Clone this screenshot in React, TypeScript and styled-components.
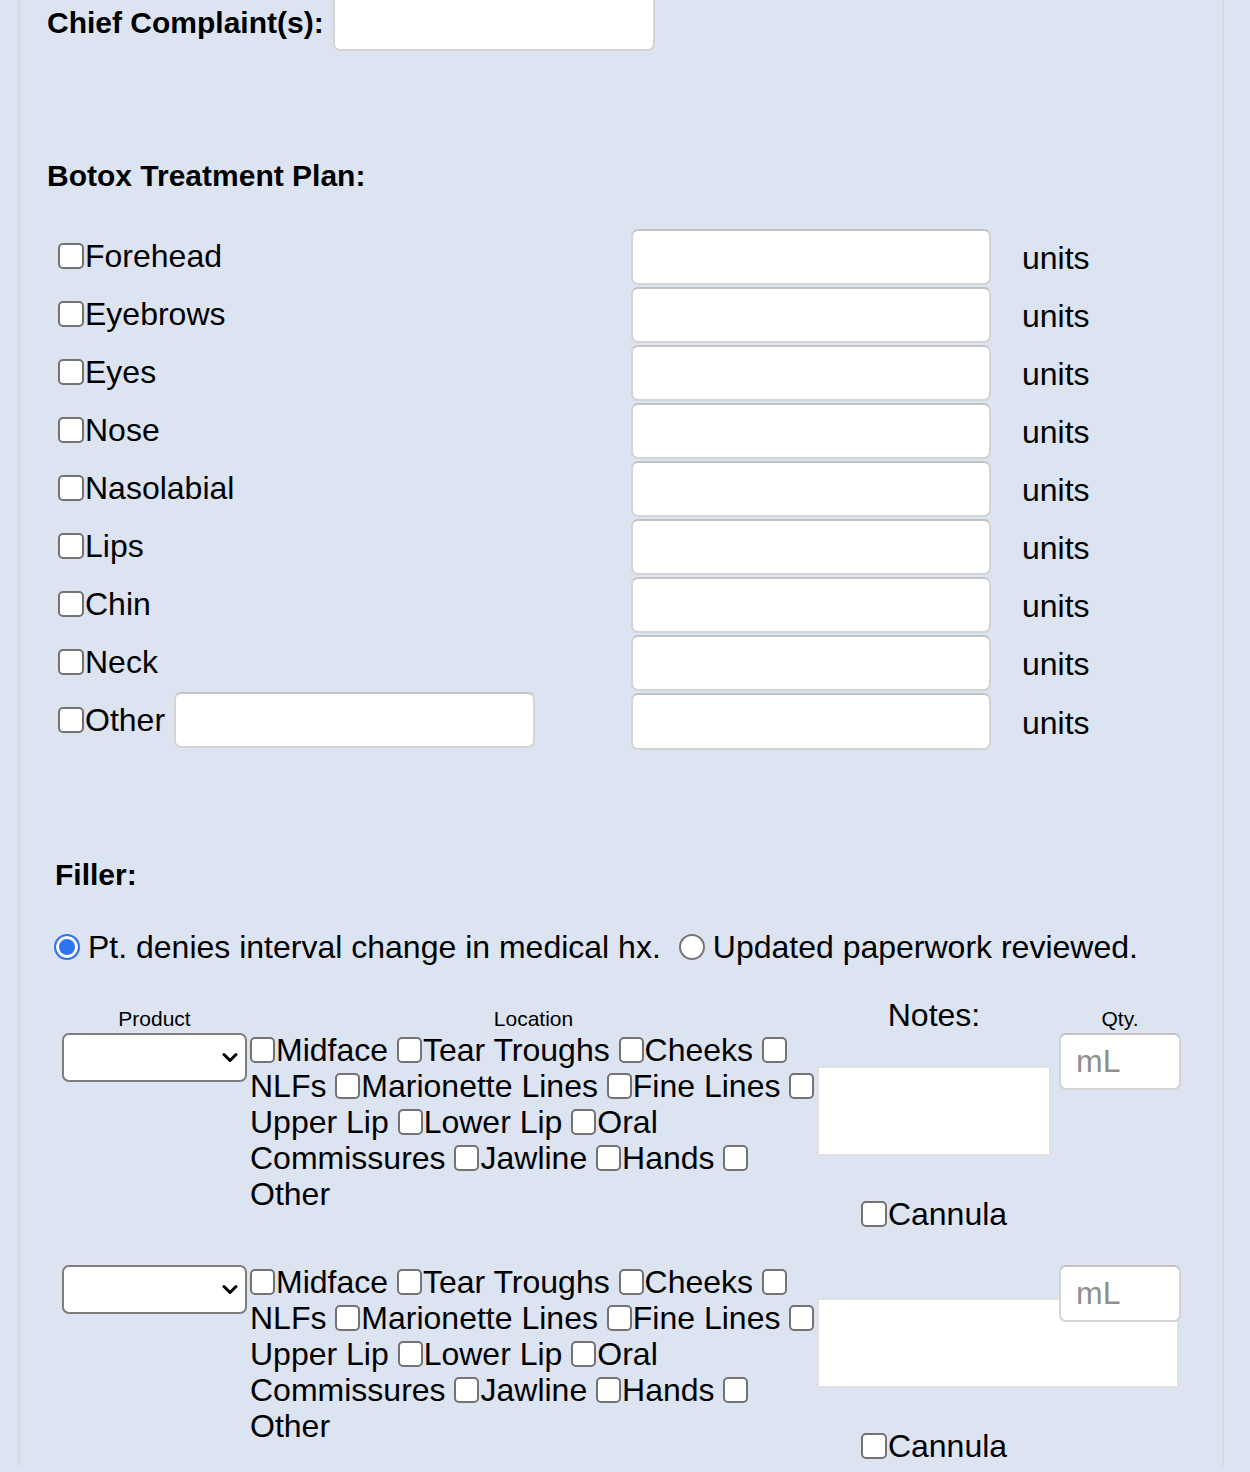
import styled, { createGlobalStyle } from "styled-components";

const GlobalStyle = createGlobalStyle`
  html, body {
    margin: 0;
    padding: 0;
    background: #dce3f1;
  }
  body {
    font-family: "Liberation Sans", Arial, sans-serif;
    color: #000;
  }
`;

const Page = styled.div`
  background: #dce3f1;
  min-height: 1472px;
  overflow: hidden;
`;

const Panel = styled.div`
  margin-left: 18px;
  width: 1206px;
  min-height: 1472px;
  border-left: 2px solid #d5d9e2;
  border-right: 2px solid #d5d9e2;
  padding-left: 27px;
  box-sizing: border-box;
  font-size: 32px;
  line-height: 36px;
`;

const ChiefRow = styled.div`
  display: flex;
  align-items: center;
  gap: 9px;
  margin-top: -6px;
`;

const Heading = styled.div<{ $indent?: number }>`
  font-weight: 700;
  font-size: 30px;
  line-height: 34px;
  margin-left: ${(p) => p.$indent ?? 0}px;
`;

const TextBox = styled.input<{ $w: number; $h?: number }>`
  box-sizing: border-box;
  width: ${(p) => p.$w}px;
  height: ${(p) => p.$h ?? 56}px;
  border: 2px solid #d4d4d4;
  border-top-color: #c3c3c3;
  border-radius: 7px;
  background: #fff;
  font: inherit;
  padding: 0 14px;
  margin: 0;
  outline: none;

  &::placeholder {
    color: #8f8f8f;
  }
`;

const BotoxHeading = styled(Heading)`
  margin-top: 108px;
`;

const BotoxGrid = styled.div`
  display: grid;
  grid-template-columns: 573px 360px auto;
  row-gap: 2px;
  margin-top: 36px;
  margin-left: 11px;
  align-items: center;
`;

const AreaLabel = styled.label`
  display: flex;
  align-items: center;
  height: 56px;
  margin-top: -3px;
  white-space: nowrap;
`;

const Units = styled.span`
  padding-left: 31px;
  padding-top: 2px;
`;

const Check = styled.input.attrs({ type: "checkbox" })<{ $size?: number }>`
  appearance: none;
  -webkit-appearance: none;
  box-sizing: border-box;
  width: ${(p) => p.$size ?? 25}px;
  height: ${(p) => p.$size ?? 26}px;
  margin: 0 1px 0 0;
  border: 2px solid #737373;
  border-radius: 5px;
  background: #fff;
  vertical-align: -2px;
  flex: none;
`;

const OtherBox = styled(TextBox)`
  margin-left: 9px;
`;

const FillerHeading = styled(Heading)`
  margin-top: 108px;
`;

const RadioRow = styled.div`
  display: flex;
  align-items: center;
  margin-top: 37px;
  margin-left: 7px;
  height: 36px;
  white-space: nowrap;
`;

const RadioOption = styled.label`
  display: inline-flex;
  align-items: center;
  gap: 8px;
  margin-right: 18px;
`;

const Radio = styled.input.attrs({ type: "radio" })`
  appearance: none;
  -webkit-appearance: none;
  box-sizing: border-box;
  width: 26px;
  height: 26px;
  margin: 0;
  border-radius: 50%;
  border: 2px solid #767676;
  background: #fff;

  &:checked {
    border-color: #2f74ef;
    background: #2f74ef;
    box-shadow: inset 0 0 0 3px #fff;
  }
`;

const FillerGrid = styled.div`
  display: grid;
  grid-template-columns: 188px 567px 242px 122px;
  margin-top: 32px;
  margin-left: 15px;
`;

const ColHead = styled.div<{ $big?: boolean; $w?: number }>`
  height: 36px;
  display: flex;
  align-items: center;
  justify-content: center;
  font-size: ${(p) => (p.$big ? 32 : 21)}px;
  width: ${(p) => (p.$w ? `${p.$w}px` : "auto")};
  padding-top: ${(p) => (p.$big ? 0 : 7)}px;
  box-sizing: border-box;
`;

const EntryCell = styled.div<{ $gap?: boolean }>`
  margin-top: ${(p) => (p.$gap ? 33 : 0)}px;
`;

const SelectWrap = styled.div`
  position: relative;
  width: 185px;
  height: 49px;
`;

const Select = styled.select`
  appearance: none;
  -webkit-appearance: none;
  box-sizing: border-box;
  width: 100%;
  height: 100%;
  border: 2px solid #7d7d7d;
  border-radius: 7px;
  background: #fff;
  font: inherit;
  margin: 0;
`;

const Chevron = styled.svg`
  position: absolute;
  right: 9px;
  top: 19px;
  width: 16px;
  height: 11px;
  pointer-events: none;
`;

const LocationList = styled.div`
  margin-top: -1px;
`;

const LocLine = styled.div`
  white-space: nowrap;
  line-height: 36px;
`;

const NotesCell = styled.div`
  display: flex;
  flex-direction: column;
  align-items: flex-start;
`;

const Notes = styled.textarea<{ $w: number }>`
  box-sizing: border-box;
  width: ${(p) => p.$w}px;
  height: 90px;
  margin: 33px 0 0 0;
  border: 2px solid #e1e1e1;
  border-radius: 0;
  background: #fff;
  resize: none;
  font: inherit;
  outline: none;
  flex: none;
`;

const CannulaLine = styled.label`
  align-self: stretch;
  display: flex;
  justify-content: center;
  align-items: center;
  height: 36px;
  margin-top: 40px;
  padding-right: 8px;
`;

const QtyBox = styled(TextBox)`
  position: relative;
  z-index: 1;
  padding-left: 15px;
`;

const AREAS = ["Forehead", "Eyebrows", "Eyes", "Nose", "Nasolabial", "Lips", "Chin", "Neck"];

type Seg = { cb?: boolean; text: string };

const LOCATION_LINES: Seg[][] = [
  [{ cb: true, text: "Midface" }, { cb: true, text: "Tear Troughs" }, { cb: true, text: "Cheeks" }, { cb: true, text: "" }],
  [{ text: "NLFs" }, { cb: true, text: "Marionette Lines" }, { cb: true, text: "Fine Lines" }, { cb: true, text: "" }],
  [{ text: "Upper Lip" }, { cb: true, text: "Lower Lip" }, { cb: true, text: "Oral" }],
  [{ text: "Commissures" }, { cb: true, text: "Jawline" }, { cb: true, text: "Hands" }, { cb: true, text: "" }],
  [{ text: "Other" }],
];

function ChevronIcon() {
  return (
    <Chevron viewBox="0 0 16 11">
      <path d="M2 2.5l6 6 6-6" fill="none" stroke="#000" strokeWidth="3" strokeLinecap="round" strokeLinejoin="round" />
    </Chevron>
  );
}

function FillerEntry({ first, wideNotes }: { first: boolean; wideNotes?: boolean }) {
  return (
    <>
      <EntryCell $gap={!first}>
        <SelectWrap>
          <Select defaultValue="">
            <option value=""></option>
          </Select>
          <ChevronIcon />
        </SelectWrap>
      </EntryCell>
      <EntryCell $gap={!first}>
        <LocationList>
          {LOCATION_LINES.map((line, li) => (
            <LocLine key={li}>
              {line.map((seg, si) => (
                <span key={si}>
                  {si > 0 && " "}
                  {seg.cb && <Check />}
                  {seg.text}
                </span>
              ))}
            </LocLine>
          ))}
        </LocationList>
      </EntryCell>
      <EntryCell $gap={!first}>
        <NotesCell>
          <Notes $w={wideNotes ? 362 : 234} />
          <CannulaLine>
            <Check $size={26} />
            Cannula
          </CannulaLine>
        </NotesCell>
      </EntryCell>
      <EntryCell $gap={!first}>
        <QtyBox $w={122} $h={57} placeholder="mL" />
      </EntryCell>
    </>
  );
}

export default function App() {
  return (
    <Page>
      <GlobalStyle />
      <Panel>
        <ChiefRow>
          <Heading>Chief Complaint(s):</Heading>
          <TextBox $w={322} $h={57} />
        </ChiefRow>

        <BotoxHeading>Botox Treatment Plan:</BotoxHeading>
        <BotoxGrid>
          {AREAS.map((area) => (
            <>
              <AreaLabel key={`${area}-l`}>
                <Check $size={26} />
                {area}
              </AreaLabel>
              <TextBox key={`${area}-i`} $w={360} />
              <Units key={`${area}-u`}>units</Units>
            </>
          ))}
          <AreaLabel>
            <Check $size={26} />
            Other
            <OtherBox $w={361} />
          </AreaLabel>
          <TextBox $w={360} $h={57} />
          <Units>units</Units>
        </BotoxGrid>

        <FillerHeading $indent={8}>Filler:</FillerHeading>
        <RadioRow>
          <RadioOption>
            <Radio name="hx" defaultChecked />
            Pt. denies interval change in medical hx.
          </RadioOption>
          <RadioOption>
            <Radio name="hx" />
            Updated paperwork reviewed.
          </RadioOption>
        </RadioRow>

        <FillerGrid>
          <ColHead $w={185}>Product</ColHead>
          <ColHead>Location</ColHead>
          <ColHead $big $w={234}>Notes:</ColHead>
          <ColHead>Qty.</ColHead>
          <FillerEntry first />
          <FillerEntry first={false} wideNotes />
        </FillerGrid>
      </Panel>
    </Page>
  );
}
